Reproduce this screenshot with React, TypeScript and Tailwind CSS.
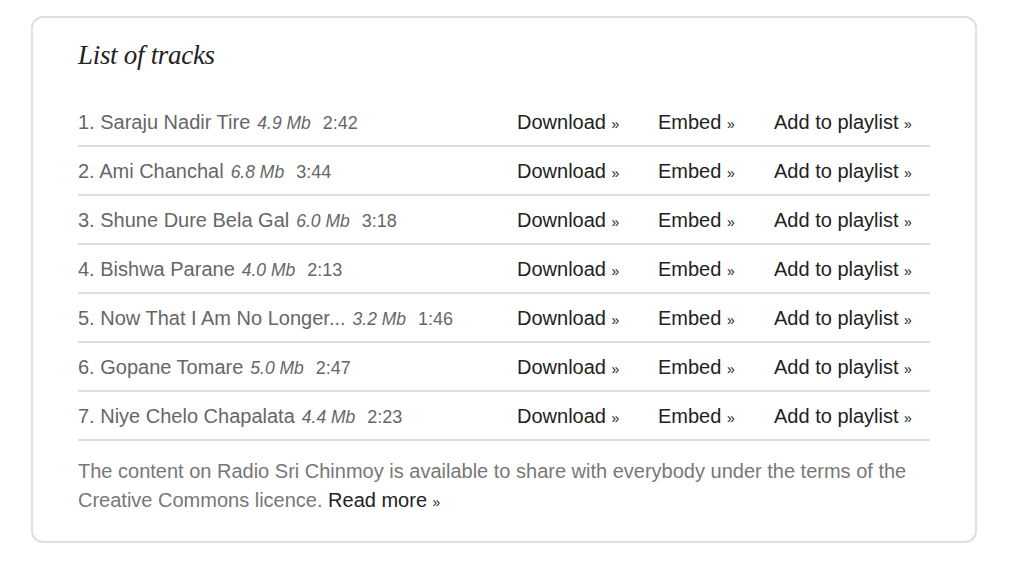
import React from "react";

const tracks = [
  ["1. Saraju Nadir Tire", "4.9 Mb", "2:42"],
  ["2. Ami Chanchal", "6.8 Mb", "3:44"],
  ["3. Shune Dure Bela Gal", "6.0 Mb", "3:18"],
  ["4. Bishwa Parane", "4.0 Mb", "2:13"],
  ["5. Now That I Am No Longer...", "3.2 Mb", "1:46"],
  ["6. Gopane Tomare", "5.0 Mb", "2:47"],
  ["7. Niye Chelo Chapalata", "4.4 Mb", "2:23"],
];

function Link({ label }: { label: string }) {
  return (
    <span className="text-[#222]">
      {label} <span className="text-[14px]">»</span>
    </span>
  );
}

export default function App() {
  return (
    <div className="min-h-[562px] bg-white pt-[16px] pl-[31px]" style={{ fontFamily: '"Liberation Sans", Arial, sans-serif' }}>
      <div className="w-[946px] h-[527px] border-2 border-[#e0e0e0] rounded-[12px] px-[45px] pt-[19px]">
        <h2
          className="italic text-[27px] leading-[36px] text-[#222] tracking-[-0.3px]"
          style={{ fontFamily: '"Liberation Serif", "Times New Roman", serif' }}
        >
          List of tracks
        </h2>
        <div className="mt-[25px]">
          {tracks.map(([name, size, dur]) => (
            <div key={name} className="flex items-center h-[49px] pt-[1px] border-b-2 border-[#dddddd] text-[20px]">
              <div className="w-[439px] text-[#666] flex items-baseline">
                <span>{name}</span>
                <span className="italic text-[17.5px] ml-[7px]">{size}</span>
                <span className="text-[18px] ml-[12px]">{dur}</span>
              </div>
              <div className="w-[141px]"><Link label="Download" /></div>
              <div className="w-[116px]"><Link label="Embed" /></div>
              <div><Link label="Add to playlist" /></div>
            </div>
          ))}
        </div>
        <p className="mt-[16px] text-[20px] leading-[29px] text-[#777] w-[852px]">
          The content on Radio Sri Chinmoy is available to share with everybody under the terms of the Creative Commons licence.{" "}
          <Link label="Read more" />
        </p>
      </div>
    </div>
  );
}
